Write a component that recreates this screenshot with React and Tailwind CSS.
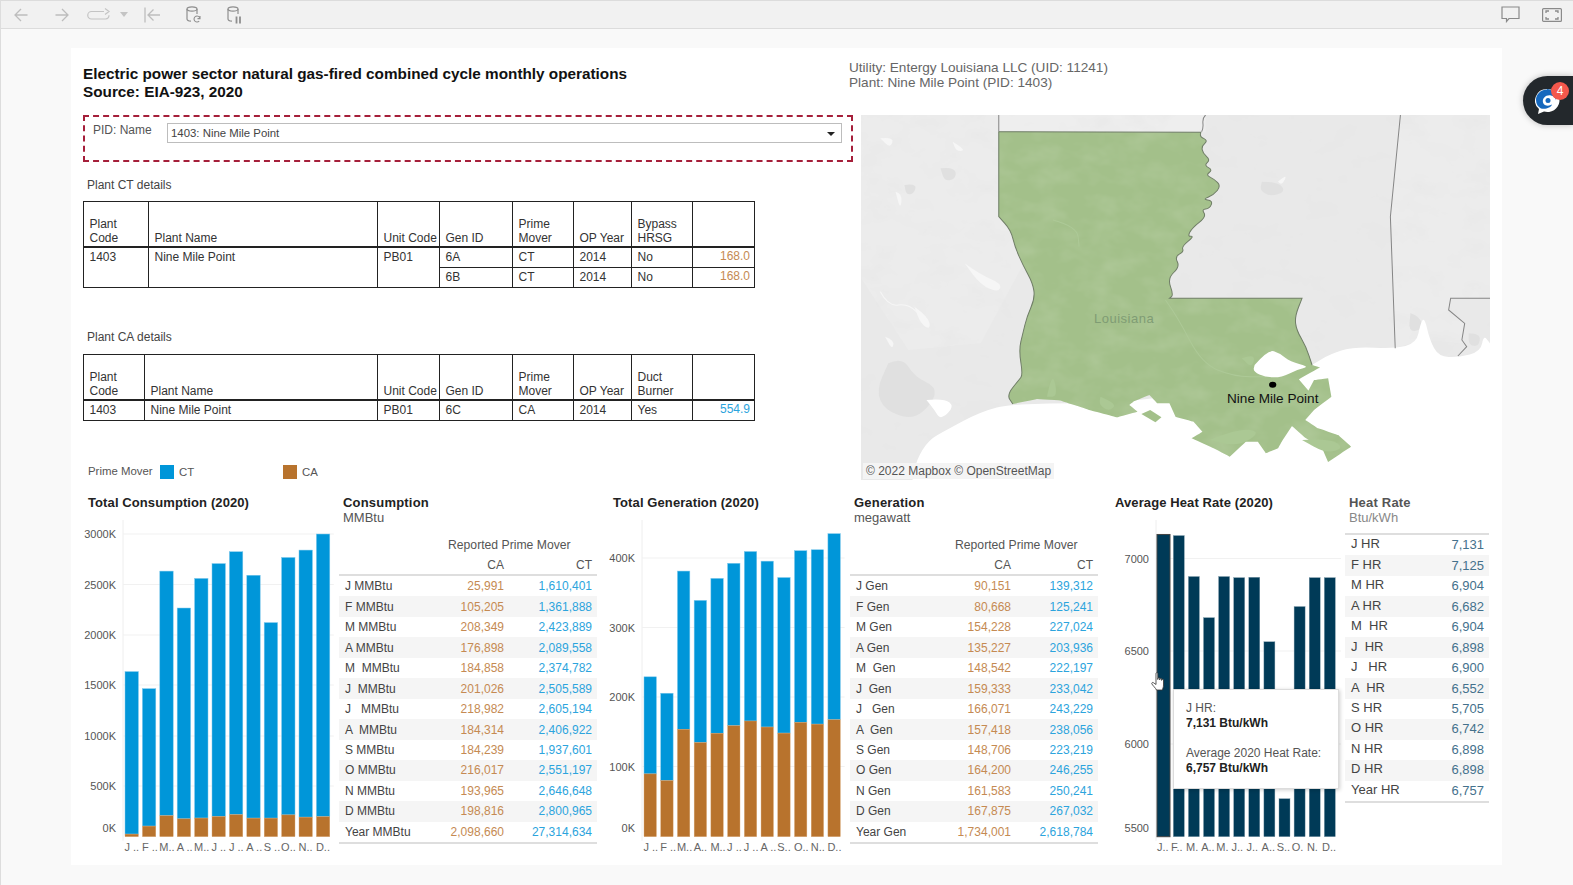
import React from 'react';

const CA_COLOR = '#b8732d';
const CT_COLOR = '#0096d9';

const consumption = [
  ['J MMBtu', 25991, 1610401],
  ['F MMBtu', 105205, 1361888],
  ['M MMBtu', 208349, 2423889],
  ['A MMBtu', 176898, 2089558],
  ['M  MMBtu', 184858, 2374782],
  ['J  MMBtu', 201026, 2505589],
  ['J   MMBtu', 218982, 2605194],
  ['A  MMBtu', 184314, 2406922],
  ['S MMBtu', 184239, 1937601],
  ['O MMBtu', 216017, 2551197],
  ['N MMBtu', 193965, 2646648],
  ['D MMBtu', 198816, 2800965],
  ['Year MMBtu', 2098660, 27314634],
];

const generation = [
  ['J Gen', 90151, 139312],
  ['F Gen', 80668, 125241],
  ['M Gen', 154228, 227024],
  ['A Gen', 135227, 203936],
  ['M  Gen', 148542, 222197],
  ['J  Gen', 159333, 233042],
  ['J   Gen', 166071, 243229],
  ['A  Gen', 157418, 238056],
  ['S Gen', 148706, 223219],
  ['O Gen', 164200, 246255],
  ['N Gen', 161583, 250241],
  ['D Gen', 167875, 267032],
  ['Year Gen', 1734001, 2618784],
];

const heatRate = [
  ['J HR', 7131],
  ['F HR', 7125],
  ['M HR', 6904],
  ['A HR', 6682],
  ['M  HR', 6904],
  ['J  HR', 6898],
  ['J   HR', 6900],
  ['A  HR', 6552],
  ['S HR', 5705],
  ['O HR', 6742],
  ['N HR', 6898],
  ['D HR', 6898],
  ['Year HR', 6757],
];

const fmt = (n) => n.toLocaleString('en-US');

// chart svg starts at y=520 of the page, base is where the bars stand
const BASE = 316.7;

function Axis({ axisX, width, ticks, labels }) {
  return (
    <>
      <line x1={axisX} x2={axisX} y1={0} y2={BASE + 4} stroke="#eeeeee" />
      {ticks.map((t) => (
        <g key={t.label}>
          {t.grid !== false && <line x1={axisX} x2={width} y1={t.y} y2={t.y} stroke="#f1f1f1" />}
          <text x={axisX - 7} y={t.labelY ?? t.y} dy="4" textAnchor="end" fontSize="11" fill="#555">
            {t.label}
          </text>
        </g>
      ))}
      {labels.map((l) => (
        <text key={l.x} x={l.x} y={331} fontSize="11" fill="#666">
          {l.text}
        </text>
      ))}
    </>
  );
}

function StackedChart({ title, data, axisX, firstX, pitch, barW, pxPerUnit, ticks, labels, titleLeft }) {
  return (
    <div className="h-full">
      <div className={`pt-[5px] h-[30px] text-[13px] leading-[16px] font-bold tracking-[0.1px] text-[#222] ${titleLeft}`}>{title}</div>
      <svg width="100%" height="335" className="block overflow-visible">
        <Axis axisX={axisX} width={axisX + 12 * pitch + 2} ticks={ticks} labels={labels.map((t, i) => ({ text: t, x: firstX + i * pitch - 0.5 }))} />
        {data.map((d, i) => {
          const caH = d[1] * pxPerUnit;
          const ctH = d[2] * pxPerUnit;
          const x = firstX + i * pitch;
          return (
            <g key={i}>
              <rect x={x} y={BASE - caH - ctH} width={barW} height={ctH} fill={CT_COLOR} stroke="#7cc8ec" strokeWidth="0.5" />
              <rect x={x} y={BASE - caH} width={barW} height={caH} fill={CA_COLOR} stroke="#d9a877" strokeWidth="0.4" />
            </g>
          );
        })}
      </svg>
    </div>
  );
}

function HeatChart() {
  const bars = heatRate.slice(0, 12);
  const py = 0.1853;
  const labels = ['J..', 'F..', 'M.', 'A..', 'M.', 'J..', 'J..', 'A..', 'S..', 'O.', 'N.', 'D..'];
  return (
    <div className="relative h-full">
      <div className="pt-[5px] pl-[17px] h-[30px] text-[13px] leading-[16px] font-bold tracking-[0.1px] text-[#222]">
        Average Heat Rate (2020)
      </div>
      <svg width="100%" height="335" className="block overflow-visible">
        <Axis
          axisX={58}
          width={243}
          ticks={[
            { label: '7000', y: 38.5 },
            { label: '6500', y: 131 },
            { label: '6000', y: 224 },
            { label: '5500', y: 316.7, labelY: 308, grid: false },
          ]}
          labels={labels.map((t, i) => ({ text: t, x: i === 0 ? 59 : 75 + (i - 1) * 15.1 - 2 }))}
        />
        {bars.map((d, i) => {
          const h = (d[1] - 5500) * py;
          if (i === 0) {
            return <rect key={i} x={59} y={BASE - h} width={13} height={h} fill="#003a57" stroke="#444" strokeWidth="1" />;
          }
          return <rect key={i} x={75.3 + (i - 1) * 15.1} y={BASE - h} width={11} height={h} fill="#003a57" stroke="#7f9cab" strokeWidth="0.4" />;
        })}
      </svg>

      {/* tooltip over the bars */}
      <div className="absolute left-[75px] top-[199px] w-[166px] h-[100px] bg-white border border-[#dcdcdc] shadow-[1px_1px_4px_rgba(0,0,0,0.2)] pl-[12px] pt-[11px] text-[12px] leading-[15px] text-[#555]">
        <div>J HR:</div>
        <div className="font-bold text-[#222]">7,131 Btu/kWh</div>
        <div className="mt-[15px]">Average 2020 Heat Rate:</div>
        <div className="font-bold text-[#222]">6,757 Btu/kWh</div>
      </div>

      {/* hand cursor */}
      <svg className="absolute left-[53px] top-[182px]" width="16" height="20" viewBox="0 0 16 20">
        <path
          d="M5 1.500c0-1 1.800-1 1.800 0V7.500l.2-1.100c0-1 1.700-1 1.700 0V8l.2-1c.1-1 1.700-.9 1.700 0v1.400l.2-.6c.2-.9 1.700-.7 1.700.2v5c0 2.500-1 3.500-1 5H5.500c-.5-1.500-4.200-5-4.700-6.200-.4-1 .9-1.800 1.600-1.100L5 12.500z"
          fill="#fff"
          stroke="#333"
          strokeWidth="0.8"
          strokeLinejoin="round"
        />
      </svg>
    </div>
  );
}

function Measures({ title, unit, rows, gridCols }) {
  return (
    <div className="h-full">
      <div className="pt-[5px] pl-[4px]">
        <div className="text-[13px] leading-[15px] font-bold tracking-[0.2px] text-[#222]">{title}</div>
        <div className="text-[13px] leading-[15px] text-[#555]">{unit}</div>
      </div>
      <div className={`grid ${gridCols} mt-[12px] pl-[6px] h-[16px] text-[12.2px] leading-[16px] text-[#555]`}>
        <div />
        <div className="col-span-2 pl-[14px] whitespace-nowrap">Reported Prime Mover</div>
      </div>
      <div className={`grid ${gridCols} mt-[4px] pb-[1px] pl-[6px] pr-[5px] text-[12px] leading-[16px] text-[#555] border-b-2 border-[#dedede]`}>
        <div />
        <div className="text-right">CA</div>
        <div className="text-right">CT</div>
      </div>
      <div className="border-b-2 border-[#dedede]">
        {rows.map((r, i) => (
          <div
            key={r[0]}
            className={`grid ${gridCols} h-[20.47px] items-center pr-[5px] pl-[6px] text-[12px] leading-[16px] ${i % 2 === 1 ? 'bg-[#f5f5f5]' : ''}`}
          >
            <div className="whitespace-pre text-[#444]">{r[0]}</div>
            <div className="text-right text-[#c58a52]">{fmt(r[1])}</div>
            <div className="text-right text-[#2ca4dd]">{fmt(r[2])}</div>
          </div>
        ))}
      </div>
    </div>
  );
}

function HeatTable() {
  return (
    <div className="h-full">
      <div className="pt-[5px] pl-[4px]">
        <div className="text-[13px] leading-[15px] font-bold tracking-[0.2px] text-[#555]">Heat Rate</div>
        <div className="text-[13px] leading-[15px] text-[#888]">Btu/kWh</div>
      </div>
      <div className="mt-[8px] border-t-2 border-b-2 border-[#dedede]">
        {heatRate.map((r, i) => (
          <div
            key={r[0]}
            className={`flex justify-between items-center h-[20.47px] pl-[6px] pr-[5px] leading-[16px] ${i % 2 === 1 ? 'bg-[#f5f5f5]' : ''}`}
          >
            <span className="whitespace-pre pb-[2px] text-[13px] text-[#444]">{r[0]}</span>
            <span className="text-[13px] text-[#44718c]">{fmt(r[1])}</span>
          </div>
        ))}
      </div>
    </div>
  );
}

function DetailTable({ firstCol, nameCol, lastHead, rows }) {
  const cell = 'border border-[#222] pl-[5.5px] pr-[2px] pt-[2px] align-top leading-[14px]';
  const head = 'border border-[#222] pl-[5.5px] pr-[2px] pb-[1px] align-bottom font-normal text-left leading-[14px]';
  return (
    <table className="border-collapse table-fixed w-[672px] text-[12px] text-[#333]">
      <colgroup>
        <col className={firstCol} />
        <col className={nameCol} />
        <col className="w-[62px]" />
        <col className="w-[73px]" />
        <col className="w-[61px]" />
        <col className="w-[58px]" />
        <col className="w-[61px]" />
        <col className="w-[62px]" />
      </colgroup>
      <thead>
        <tr className="h-[45px] border-b-2 border-[#222]">
          <th className={head}>Plant<br />Code</th>
          <th className={head}>Plant Name</th>
          <th className={`${head} whitespace-nowrap`}>Unit Code</th>
          <th className={head}>Gen ID</th>
          <th className={head}>Prime<br />Mover</th>
          <th className={head}>OP Year</th>
          <th className={head}>{lastHead[0]}<br />{lastHead[1]}</th>
          <th className={head} />
        </tr>
      </thead>
      <tbody>
        {rows.map((r, i) => (
          <tr key={r.gen} className="h-[20.5px]">
            {i === 0 && (
              <>
                <td rowSpan={rows.length} className={cell}>1403</td>
                <td rowSpan={rows.length} className={cell}>Nine Mile Point</td>
                <td rowSpan={rows.length} className={cell}>PB01</td>
              </>
            )}
            <td className={cell}>{r.gen}</td>
            <td className={cell}>{r.mover}</td>
            <td className={cell}>2014</td>
            <td className={cell}>{r.last}</td>
            <td className={`${cell} text-right !pr-[4px] !pt-[1px] ${r.mover === 'CT' ? 'text-[#c58a52]' : 'text-[#2ca4dd]'}`}>{r.value}</td>
          </tr>
        ))}
      </tbody>
    </table>
  );
}

// quadratic curve through the midpoints; a repeated point stays a sharp corner
function smooth(pts, close = true) {
  let d = `M${pts[0][0]} ${pts[0][1]}`;
  for (let i = 1; i < pts.length - 1; i++) {
    const mx = (pts[i][0] + pts[i + 1][0]) / 2;
    const my = (pts[i][1] + pts[i + 1][1]) / 2;
    d += `Q${pts[i][0]} ${pts[i][1]} ${mx} ${my}`;
  }
  const last = pts[pts.length - 1];
  d += `L${last[0]} ${last[1]}`;
  return close ? d + 'Z' : d;
}

// north line, Mississippi river, then the east part down to the coast
const laTop = [
  [345, 65], [345, 65], [848, 67], [848, 67], [846, 80], [866, 92], [850, 108], [853, 130], [872, 150], [856, 166], [878, 180], [860, 195],
  [882, 208], [898, 228], [880, 255], [852, 268], [878, 272], [870, 296], [850, 298], [862, 320], [826, 354], [815, 380], [832, 378],
  [800, 410], [806, 425], [783, 440], [796, 470], [765, 505], [780, 555], [770, 565], [770, 565], [1100, 565], [1100, 565],
  [1082, 620], [1086, 660], [1110, 710], [1125, 765], [1125, 765],
];
// coast, east to west: angular as in the map tiles
const laCoast = [
  [1145, 772], [1092, 808], [1116, 842], [1130, 810], [1165, 805], [1173, 860], [1130, 900], [1108, 930], [1140, 955], [1190, 975],
  [1222, 1010], [1195, 1032], [1165, 1056], [1150, 1015], [1110, 985], [1075, 948], [1052, 990], [1040, 1015], [1010, 1030], [990, 995],
  [960, 995], [920, 1040], [880, 1015], [825, 985], [852, 965], [830, 935], [785, 920], [770, 880], [740, 880], [720, 855], [680, 875],
  [670, 885], [690, 905], [640, 922], [570, 900], [500, 872], [440, 867],
].flatMap((p) => [p, p]);
// Sabine river, west border up to the corner
const laWest = [
  [380, 882], [380, 882], [365, 855], [395, 810], [405, 795], [395, 720], [405, 670], [415, 620], [435, 565], [430, 520], [405, 465], [385, 410],
  [375, 360], [345, 320], [345, 320], [345, 65],
];
const laOutline = [...laTop, ...laCoast, ...laWest];

const sea = [
  [130, 1110], [130, 1110], [140, 1050], [170, 990], [215, 960], [300, 905], [380, 880], [700, 880], [1100, 780], [1125, 765], [1170, 732], [1230, 710], [1330, 716], [1385, 700],
  [1395, 640], [1405, 622], [1418, 690], [1440, 740], [1490, 742], [1545, 725], [1552, 675], [1568, 700], [1568, 700], [1568, 1110], [1568, 1110],
];

const lake = [[982, 765], [1015, 718], [1045, 730], [1070, 755], [1120, 770], [1085, 780], [1050, 802], [1010, 802], [978, 785], [982, 765]];

const grayPatches = [
  [[70, 760], [105, 740], [135, 800], [190, 830], [180, 880], [130, 930], [60, 900], [40, 840], [70, 760]],
  [[200, 175], [235, 170], [240, 205], [210, 215], [200, 175]],
  [[110, 225], [140, 220], [135, 250], [115, 255], [110, 225]],
  [[1000, 215], [1040, 215], [1060, 245], [1020, 260], [995, 240], [1000, 215]],
  [[1370, 610], [1395, 620], [1400, 660], [1365, 665], [1370, 610]],
  [[1515, 670], [1545, 670], [1540, 710], [1515, 705], [1515, 670]],
];
const paleLakes = [
  [[50, 85], [85, 80], [75, 115], [50, 85]],
  [[230, 95], [265, 120], [240, 125], [230, 95]],
  [[88, 245], [105, 250], [100, 300], [88, 245]],
  [[260, 460], [300, 495], [352, 520], [345, 548], [300, 525], [260, 460]],
  [[135, 590], [170, 620], [175, 660], [150, 640], [135, 590]],
  [[62, 680], [85, 690], [80, 720], [62, 680]],
  [[1040, 215], [1065, 190], [1050, 225], [1040, 215]],
];
const greenPatches = [
  [[465, 860], [478, 780], [492, 860], [465, 860]],
  [[598, 860], [640, 880], [620, 905], [595, 885], [598, 860]],
  [[870, 990], [940, 955], [1000, 965], [940, 1010], [870, 990]],
  [[1100, 990], [1170, 985], [1205, 1015], [1160, 1030], [1100, 990]],
  [[950, 745], [985, 730], [975, 775], [950, 745]],
];

function LouisianaMap() {
  return (
    <div className="relative w-[629px] h-[365px] overflow-hidden">
      <svg width="629" height="365" viewBox="2 15 1566 1095" preserveAspectRatio="none" className="block">
        <defs>
          <filter id="landNoise" x="0" y="0" width="100%" height="100%">
            <feTurbulence type="fractalNoise" baseFrequency="0.012 0.015" numOctaves="4" seed="7" />
            <feColorMatrix values="0 0 0 0 0.8  0 0 0 0 0.8  0 0 0 0 0.8  1.6 0 0 0 -0.75" />
          </filter>
          <filter id="greenNoise" x="0" y="0" width="100%" height="100%">
            <feTurbulence type="fractalNoise" baseFrequency="0.014 0.018" numOctaves="3" seed="3" />
            <feColorMatrix values="0 0 0 0 0.6  0 0 0 0 0.72  0 0 0 0 0.5  0.5 0 0 0 -0.2" />
          </filter>
          <clipPath id="laClip">
            <path d={smooth(laOutline)} />
          </clipPath>
        </defs>
        <rect x="0" y="0" width="1568" height="1125" fill="#e9e9e9" />
        <rect x="345" y="15" width="515" height="52" fill="#eeeeee" />
        <path d="M1345 15H1568V565H1470L1465 600L1505 640L1500 700L1400 690L1330 715L1320 320Z" fill="#ececec" />
        <path d="M0 15H345V320L375 360L405 465L300 700L120 720L0 500Z" fill="#ececec" />
        <rect x="0" y="0" width="1568" height="1125" filter="url(#landNoise)" />
        {grayPatches.map((p, i) => <path key={i} d={smooth(p)} fill="#e0e0e0" />)}
        {paleLakes.map((p, i) => <path key={i} d={smooth(p)} fill="#f6f6f6" />)}
        <path d={smooth([[50, 545], [70, 590], [120, 580], [160, 630]], false)} fill="none" stroke="#f6f6f6" strokeWidth="3" />

        {/* sea and coast */}
        <path d={smooth(sea)} fill="#fff" />
        <path d={smooth([[165, 870], [210, 865], [235, 890], [200, 930], [185, 900], [165, 870]])} fill="#fff" />

        {/* state lines */}
        <path
          d="M345 15V65M860 15C845 30 860 45 850 65M1345 15L1320 320L1332 715M1568 565H1470L1465 600L1505 640L1498 690L1510 710L1488 738"
          fill="none"
          stroke="#858585"
          strokeWidth="1"
          vectorEffect="non-scaling-stroke"
        />

        {/* Louisiana */}
        <path d={smooth(laOutline)} fill="#a3c08a" />
        <g clipPath="url(#laClip)">
          <rect x="0" y="0" width="1568" height="1125" filter="url(#greenNoise)" />
        </g>
        <path d={smooth(laTop, false)} fill="none" stroke="#6f7d66" strokeWidth="1" vectorEffect="non-scaling-stroke" />
        <path d={smooth(laWest, false)} fill="none" stroke="#6f7d66" strokeWidth="1" vectorEffect="non-scaling-stroke" />
        <path d="M700 912L722 900L750 922L735 937Z" fill="#a3c08a" />
        {greenPatches.map((p, i) => <path key={i} d={smooth(p)} fill="#abc894" />)}
        <path
          d={smooth([[760, 570], [790, 620], [850, 760], [930, 800], [1010, 800]], false)}
          fill="none"
          stroke="#adc997"
          strokeWidth="1"
          vectorEffect="non-scaling-stroke"
        />
        <path
          d={smooth([[480, 330], [540, 350], [545, 410]], false)}
          fill="none"
          stroke="#adc997"
          strokeWidth="1"
          vectorEffect="non-scaling-stroke"
        />

        {/* Lake Pontchartrain */}
        <path d={smooth(lake)} fill="#fff" />
        <ellipse cx="1027" cy="824" rx="9" ry="9" fill="#000" />
      </svg>
      <span className="absolute left-[233px] top-[196px] text-[13px] leading-[16px] tracking-[0.5px] text-[#7f9c74]">Louisiana</span>
      <span className="absolute left-[366px] top-[276px] text-[13.6px] leading-[16px] text-[#111]">Nine Mile Point</span>
      <span className="absolute left-[2px] bottom-[1px] px-[3px] bg-[#f4f4f4] text-[12px] leading-[16px] text-[#555]">© 2022 Mapbox © OpenStreetMap</span>
    </div>
  );
}

const Arrow = ({ flip }) => (
  <svg width="14" height="14" viewBox="0 0 14 14" fill="none" stroke="#bdbdbd" strokeWidth="1.3" className={flip ? 'rotate-180' : ''}>
    <path d="M13.5 7H1M7 1L1 7l6 6" />
  </svg>
);

const DbIcon = ({ children }) => (
  <svg width="15" height="18" viewBox="0 0 15 18" fill="none" stroke="#8f8f8f" strokeWidth="1.2">
    <ellipse cx="6" cy="3" rx="5" ry="2.200" />
    <path d="M1 3v10c0 1 1.500 2 4 2.200M11 3v5" />
    {children}
  </svg>
);

function Toolbar() {
  return (
    <div className="flex items-center h-[29px] bg-[#f1f1f1] border-t border-b border-[#dcdcdc]">
      <div className="ml-[13px]"><Arrow /></div>
      <div className="ml-[27px]"><Arrow flip /></div>
      <svg className="ml-[18px]" width="24" height="14" viewBox="0 0 24 14" fill="none" stroke="#c4c4c4" strokeWidth="1.2">
        <path d="M17 3.500H4.500a3.700 3.700 0 000 7.500h14a3.700 3.700 0 003.500-3.700M18 .5l4 3-4 3" />
      </svg>
      <div className="ml-[9px] w-0 h-0 border-l-[4px] border-r-[4px] border-t-[5px] border-l-transparent border-r-transparent border-t-[#c4c4c4]" />
      <svg className="ml-[16px]" width="16" height="16" viewBox="0 0 16 16" fill="none" stroke="#bdbdbd" strokeWidth="1.3">
        <path d="M1 .5V15.500M16 8H4M9.500 2.500L4 8l5.500 5.500" />
      </svg>
      <div className="ml-[26px]">
        <DbIcon>
          <path d="M14 12.500a3 3 0 10-.8 2.600M14 10v2.600h-2.500" strokeWidth="1.1" />
        </DbIcon>
      </div>
      <div className="ml-[26px]">
        <DbIcon>
          <path d="M9.500 10.500v7M13 10.500v7" strokeWidth="1.800" />
        </DbIcon>
      </div>
      <svg className="ml-auto" width="19" height="17" viewBox="0 0 19 17" fill="none" stroke="#8a8a8a" strokeWidth="1.2">
        <path d="M1 1h17v11.500H8L5.500 15.500v-3H1z" />
      </svg>
      <svg className="ml-[22px] mr-[11px]" width="20" height="14" viewBox="0 0 20 14" fill="none">
        <rect x="0.6" y="0.6" width="18.8" height="12.8" rx="1" stroke="#8a8a8a" strokeWidth="1.2" />
        <path d="M4 5V3h3M13 3h3v2M16 9v2h-3M7 11H4V9" stroke="#8a8a8a" strokeWidth="1.3" />
      </svg>
    </div>
  );
}

function ChatWidget() {
  return (
    <div className="absolute right-0 top-[76px] w-[50px] h-[49px] rounded-l-[25px] bg-[#23282c] shadow-[0_0_6px_rgba(0,0,0,0.25)]">
      <svg className="absolute left-[12px] top-[12px]" width="25" height="27" viewBox="0 0 25 27">
        <path d="M12 1a12 11.500 0 00-8 20l-1 5 6-2.500a12 11.500 0 103-22.500z" fill="#fff" />
        <path d="M12 1.500C5 1.500 1 7 1 12c0 4 2 7 5 8.500 5 1 10-1 11-4-3 2-8 1.500-9-2-1-4 3-8 8-7 3 .5 5 3 5 5 1-4-3-11.500-9-11.500z" fill="#1668bd" />
        <circle cx="13" cy="12.500" r="2.500" fill="#1668bd" />
      </svg>
      <div className="absolute left-[28px] top-[6px] w-[18px] h-[18px] rounded-full bg-[#f4584c] text-white text-[12px] leading-[18px] text-center">4</div>
    </div>
  );
}

export default function App() {
  const ct = [
    { gen: '6A', mover: 'CT', last: 'No', value: '168.0' },
    { gen: '6B', mover: 'CT', last: 'No', value: '168.0' },
  ];
  const ca = [{ gen: '6C', mover: 'CA', last: 'Yes', value: '554.9' }];
  const monthsA = ['J ..', 'F ..', 'M..', 'A ..', 'M..', 'J ..', 'J ..', 'A ..', 'S ..', 'O..', 'N..', 'D..'];
  const monthsB = ['J ..', 'F ..', 'M..', 'A..', 'M..', 'J ..', 'J ..', 'A ..', 'S..', 'O..', 'N..', 'D..'];

  return (
    <div className="relative w-[1573px] h-[885px] overflow-hidden bg-[#f9f9f9] border-l border-[#dddddd] [font-family:'Liberation_Sans',Arial,sans-serif]">
      <Toolbar />
      <ChatWidget />

      <div className="mt-[19px] ml-[70px] w-[1431px] h-[817px] bg-white">
        {/* heading */}
        <div className="flex h-[67px]">
          <div className="w-[778px] pl-[12px] pt-[17px] text-[15.3px] leading-[18px] font-bold text-[#111]">
            <div>Electric power sector natural gas-fired combined cycle monthly operations</div>
            <div>Source: EIA-923, 2020</div>
          </div>
          <div className="pt-[12px] text-[13.6px] leading-[15px] text-[#666]">
            <div>Utility: Entergy Louisiana LLC (UID: 11241)</div>
            <div>Plant: Nine Mile Point (PID: 1403)</div>
          </div>
        </div>

        {/* filter, tables and map */}
        <div className="flex h-[375px]">
          <div className="w-[790px] pl-[12px]">
            <div className="flex items-start w-[770px] h-[47px] border-2 border-dashed border-[#a51f3a] pt-[6px]">
              <div className="w-[82px] pl-[8px] text-[12px] leading-[15px] text-[#555]">PID: Name</div>
              <div className="flex items-center justify-between w-[675px] h-[20px] bg-white border border-[#bdbdbd] pl-[3px] pr-[6px] pt-[1px] text-[11.4px] text-[#444]">
                <span>1403: Nine Mile Point</span>
                <span className="w-0 h-0 border-l-[4px] border-r-[4px] border-t-[4px] border-l-transparent border-r-transparent border-t-[#222]" />
              </div>
            </div>

            <div className="mt-[15px] pl-[4px] text-[12px] leading-[16px] text-[#444]">Plant CT details</div>
            <div className="mt-[8px]">
              <DetailTable firstCol="w-[65px]" nameCol="w-[229px]" lastHead={['Bypass', 'HRSG']} rows={ct} />
            </div>

            <div className="mt-[41px] pl-[4px] text-[12px] leading-[16px] text-[#444]">Plant CA details</div>
            <div className="mt-[9px]">
              <DetailTable firstCol="w-[61px]" nameCol="w-[233px]" lastHead={['Duct', 'Burner']} rows={ca} />
            </div>

            <div className="flex items-center mt-[44px] pl-[5px] h-[14px] text-[11.4px] text-[#555]">
              <span className="w-[72px]">Prime Mover</span>
              <span className="w-[14px] h-[14px] bg-[#0096d9]" />
              <span className="ml-[5px] pt-[2px] w-[104px]">CT</span>
              <span className="w-[14px] h-[14px] bg-[#b8732d]" />
              <span className="ml-[5px] pt-[2px]">CA</span>
            </div>
          </div>
          <LouisianaMap />
        </div>

        {/* charts and measure tables */}
        <div className="grid grid-cols-[268px_258px_253px_248px_247px_144px] h-[375px]">
          <StackedChart
            title="Total Consumption (2020)"
            titleLeft="pl-[17px]"
            data={consumption.slice(0, 12)}
            axisX={52}
            firstX={54}
            pitch={17.4}
            barW={13.4}
            pxPerUnit={302.7 / 3000000}
            labels={monthsA}
            ticks={[
              { label: '3000K', y: 14 },
              { label: '2500K', y: 64.5 },
              { label: '2000K', y: 115 },
              { label: '1500K', y: 165 },
              { label: '1000K', y: 216 },
              { label: '500K', y: 266 },
              { label: '0K', y: 316.7, labelY: 308, grid: false },
            ]}
          />
          <Measures title="Consumption" unit="MMBtu" rows={consumption} gridCols="grid-cols-[89px_70px_88px]" />
          <StackedChart
            title="Total Generation (2020)"
            titleLeft="pl-[16px]"
            data={generation.slice(0, 12)}
            axisX={45}
            firstX={47}
            pitch={16.72}
            barW={12.4}
            pxPerUnit={278.7 / 400000}
            labels={monthsB}
            ticks={[
              { label: '400K', y: 38 },
              { label: '300K', y: 107.5 },
              { label: '200K', y: 177 },
              { label: '100K', y: 246.5 },
              { label: '0K', y: 316.7, labelY: 308, grid: false },
            ]}
          />
          <Measures title="Generation" unit="megawatt" rows={generation} gridCols="grid-cols-[85px_70px_82px]" />
          <HeatChart />
          <HeatTable />
        </div>
      </div>
    </div>
  );
}
